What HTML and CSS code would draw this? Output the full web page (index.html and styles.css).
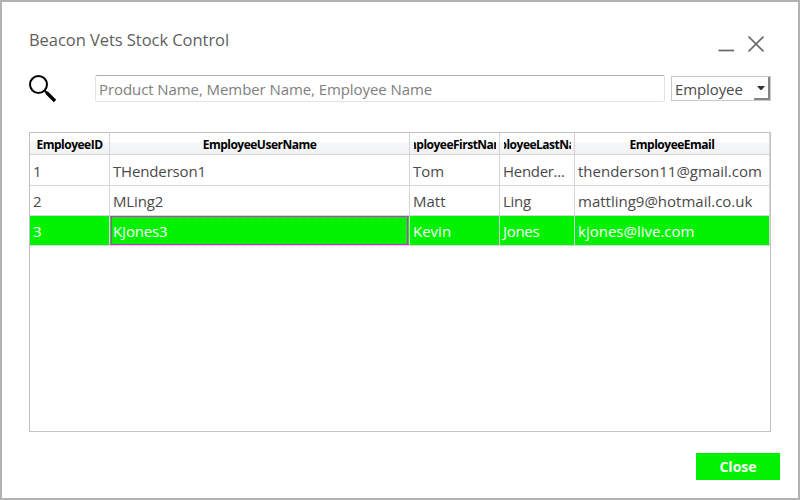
FILE: index.html
```html
<!DOCTYPE html>
<html lang="en">
<head>
<meta charset="utf-8">
<title>Beacon Vets Stock Control</title>
<link rel="stylesheet" href="styles.css">
</head>
<body>
<main class="window">
  <header class="titlebar">
    <h1 class="title">Beacon Vets Stock Control</h1>
    <svg class="controls" width="48" height="20" viewBox="0 0 48 20" fill="none" stroke="#666" stroke-width="1.7">
      <path d="M0.5 15.5H16"/>
      <path d="M30.5 1.5L45.5 16.5M45.5 1.5L30.5 16.5"/>
    </svg>
  </header>
  <div class="search">
    <svg class="lens" width="28" height="28" viewBox="0 0 28 28" fill="none" stroke="#000">
      <circle cx="9.5" cy="9.5" r="8.5" stroke-width="2"/>
      <path d="M15.5 15.5L18.5 18.5" stroke-width="2"/>
      <path d="M17.5 17.5L26 26" stroke-width="3.4"/>
    </svg>
    <input class="query" type="text" placeholder="Product Name, Member Name, Employee Name">
    <div class="combo">
      <span class="combo-text">Employee</span>
      <span class="combo-button"><svg width="8" height="4" viewBox="0 0 8 4"><path d="M0 0H8L4.5 4H3.5Z" fill="#333"/></svg></span>
    </div>
  </div>
  <section class="grid">
    <div class="row head">
      <div class="cell"><span>EmployeeID</span></div>
      <div class="cell"><span>EmployeeUserName</span></div>
      <div class="cell"><span>EmployeeFirstName</span></div>
      <div class="cell"><span>EmployeeLastName</span></div>
      <div class="cell"><span>EmployeeEmail</span></div>
    </div>
    <div class="row first">
      <div class="cell">1</div><div class="cell">THenderson1</div><div class="cell">Tom</div><div class="cell">Hender...</div><div class="cell">thenderson11@gmail.com</div>
    </div>
    <div class="row">
      <div class="cell">2</div><div class="cell">MLing2</div><div class="cell">Matt</div><div class="cell">Ling</div><div class="cell">mattling9@hotmail.co.uk</div>
    </div>
    <div class="row selected">
      <div class="cell">3</div><div class="cell focused">KJones3</div><div class="cell">Kevin</div><div class="cell">Jones</div><div class="cell">kjones@live.com</div>
    </div>
  </section>
  <footer class="actions"><button class="close">Close</button></footer>
</main>
</body>
</html>
```
FILE: styles.css
```css
* { box-sizing: border-box; }
body { margin: 0; font-family: "Open Sans", "Noto Sans", sans-serif; font-size: 15px; color: #4a4a4a; }
.window { width: 800px; height: 500px; border: 2px solid #b2b2b2; background: #fff; padding: 26px 18px 0 27px; display: flex; flex-direction: column; }
.titlebar { display: flex; justify-content: space-between; height: 46px; padding-right: 14px; }
.title { margin: 0; font-size: 16.5px; font-weight: 400; line-height: 24px; color: #606060; letter-spacing: -0.05px; }
.controls { margin-top: 7px; }
.search { display: flex; height: 29px; margin-right: 9px; }
.lens { margin: 1px 38px 0 0; }
.query { width: 570px; height: 27px; margin-top: 1px; padding: 0 3px; border: 1px solid #e2e3ea; border-top-color: #abadb3; border-radius: 2px; font: inherit; letter-spacing: -0.08px; outline: 0; }
.query::placeholder { color: #808080; opacity: 1; }
.combo { display: flex; justify-content: space-between; width: 100px; height: 25px; margin: 2px 0 0 6px; border: 1px solid #c8c8c8; padding-left: 3px; }
.combo-text { line-height: 25px; letter-spacing: -0.1px; }
.combo-button { display: flex; justify-content: center; width: 16px; height: 23px; padding-top: 9px; border-right: 2px solid #858585; border-bottom: 2px solid #858585; }
.grid { width: 742px; height: 300px; margin-top: 29px; border: 1px solid #c3c3c3; flex: none; }
.row { display: grid; grid-template-columns: 80px 300px 90px 75px 195px; height: 30px; }
.cell { border-right: 1px solid #d5d5d5; border-bottom: 1px solid #d5d5d5; padding-left: 3px; line-height: 31px; overflow: hidden; white-space: nowrap; min-width: 0; }
.cell:nth-child(2) { letter-spacing: -0.15px; }
.cell:nth-child(4) { letter-spacing: -0.3px; }
.first { height: 31px; }
.first .cell { line-height: 33px; }
.head { height: 22px; background: linear-gradient(#fff 0 9px, #f7f8fa 9px, #f1f2f4); color: #000; font-size: 12px; font-weight: 700; }
.head .cell { display: flex; padding: 0 3px 0 3px; line-height: 23px; }
.head .cell:nth-child(3), .head .cell:nth-child(4) { padding-left: 4px; }
.head span { flex: 1; display: flex; justify-content: center; overflow: hidden; letter-spacing: -0.5px; }
.selected .cell { background: #00f200; color: #fff; }
.selected .focused {
  --dots: #ff0dff 1px, #a848a8 1px;
  background:
    linear-gradient(90deg, var(--dots)) 1px 0 / 2px 1px repeat-x,
    linear-gradient(90deg, var(--dots)) 1px 28px / 2px 1px repeat-x,
    linear-gradient(var(--dots)) 1px 0 / 1px 2px repeat-y,
    linear-gradient(var(--dots)) 297px 0 / 1px 2px repeat-y,
    #00f200;
}
.actions { display: flex; justify-content: flex-end; margin-top: 21px; }
.close { width: 84px; height: 27px; padding: 0; border: 0; background: #00f200; color: #fff; font: 700 14px/27px "Open Sans", sans-serif; }
```
